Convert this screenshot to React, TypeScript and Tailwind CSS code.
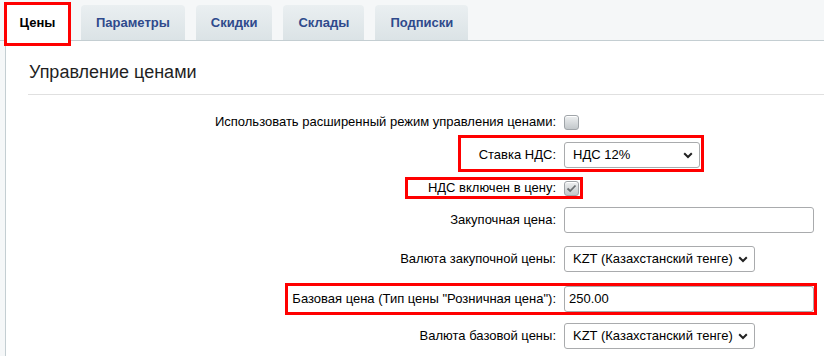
import React from "react";

const tabs = ["Параметры", "Скидки", "Склады", "Подписки"];

const Chevron = () => (
  <svg width="10" height="7" viewBox="0 0 10 7" className="shrink-0">
    <path d="M1.2 1.3 L5 5 L8.8 1.3" fill="none" stroke="#222" strokeWidth="2" />
  </svg>
);

const Checkbox = ({ checked }: { checked?: boolean }) => (
  <span className="flex h-[15px] w-[15px] items-center justify-center rounded-[3px] border border-[#a0a5a9] bg-gradient-to-b from-[#eef0f1] to-[#c3c8cb] shadow-[inset_0_1px_0_#fff]">
    {checked && (
      <svg width="11" height="9" viewBox="0 0 11 9">
        <path d="M1.5 4.5 L4.2 7 L9.5 1.5" fill="none" stroke="#6b6f72" strokeWidth="1.8" />
      </svg>
    )}
  </span>
);

const FakeSelect = ({ value, w }: { value: string; w: string }) => (
  <div
    className={`flex h-[26px] ${w} items-center justify-between rounded-[3px] border border-[#a9abad] bg-white pl-[8px] pr-[6px] text-[13px] text-black`}
  >
    <span>{value}</span>
    <Chevron />
  </div>
);

const TextInput = ({ value }: { value?: string }) => (
  <div className="flex h-[26px] w-[250px] items-center rounded-[3px] border border-[#a9abad] bg-white pl-[4px] text-[13px] text-black">
    {value}
  </div>
);

const Row = ({
  label,
  h,
  children,
}: {
  label: string;
  h: string;
  children: React.ReactNode;
}) => (
  <div className={`grid ${h} grid-cols-[550px_1fr] items-center gap-x-2`}>
    <div className="text-right text-[13px] text-black">{label}</div>
    <div className="flex items-center">{children}</div>
  </div>
);

export default function App() {
  return (
    <div
      className="relative flex h-[356px] w-[824px] flex-col overflow-hidden bg-[#f5f7f8]"
      style={{ fontFamily: '"Liberation Sans", Arial, sans-serif' }}
    >
      {/* tabs */}
      <div className="flex h-[41px] shrink-0 items-end gap-[11px] border-b border-[#c4ced2] pl-[5px]">
        <div className="relative -mb-px flex h-[36px] w-[65px] items-center justify-center bg-white text-[13px] font-bold text-black">
          Цены
        </div>
        {tabs.map((t) => (
          <div
            key={t}
            className="flex h-[35px] items-center rounded-t-[4px] bg-gradient-to-b from-[#eaeff1] to-[#dbe3e6] px-[15px] text-[13px] font-bold text-[#2f4a8c]"
          >
            {t}
          </div>
        ))}
      </div>

      {/* content */}
      <div className="ml-[5px] flex flex-1 flex-col border-l border-[#c4ced2] bg-white">
        <div className="h-[53px] shrink-0 pl-[23px] pt-[18px] text-[18px] text-[#1f1f1f]">
          Управление ценами
        </div>
        <div className="ml-[22px] border-t border-[#e0e0e0]" />

        <div className="pt-[11px]">
          <Row label="Использовать расширенный режим управления ценами:" h="h-[32px]">
            <Checkbox />
          </Row>
          <Row label="Ставка НДС:" h="h-[34px]">
            <FakeSelect value="НДС 12%" w="w-[136px]" />
          </Row>
          <Row label="НДС включен в цену:" h="h-[32px]">
            <Checkbox checked />
          </Row>
          <Row label="Закупочная цена:" h="h-[32px]">
            <TextInput />
          </Row>
          <Row label="Валюта закупочной цены:" h="h-[46px]">
            <FakeSelect value="KZT (Казахстанский тенге)" w="w-[191px]" />
          </Row>
          <Row label='Базовая цена (Тип цены "Розничная цена"):' h="h-[34px]">
            <TextInput value="250.00" />
          </Row>
          <Row label="Валюта базовой цены:" h="h-[40px]">
            <FakeSelect value="KZT (Казахстанский тенге)" w="w-[191px]" />
          </Row>
        </div>
      </div>

      {/* red annotation boxes */}
      <div className="pointer-events-none absolute left-[4px] top-[2px] h-[44px] w-[67px] border-[3px] border-[#ff0000]" />
      <div className="pointer-events-none absolute left-[458px] top-[135px] h-[37px] w-[246px] border-[3px] border-[#ff0000]" />
      <div className="pointer-events-none absolute left-[405px] top-[177px] h-[22px] w-[178px] border-[3px] border-[#ff0000]" />
      <div className="pointer-events-none absolute left-[285px] top-[283px] h-[32px] w-[532px] border-[3px] border-[#ff0000]" />
    </div>
  );
}
